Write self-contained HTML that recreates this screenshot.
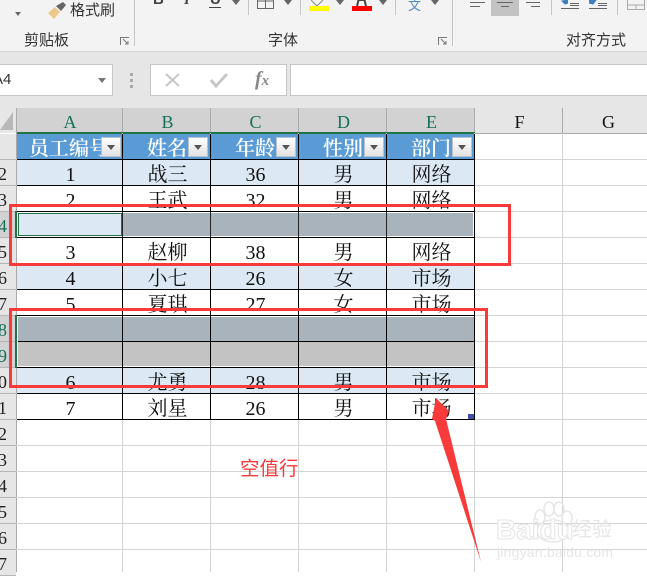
<!DOCTYPE html>
<html lang="zh"><head><meta charset="utf-8"><title>Excel</title>
<style>
html,body{margin:0;padding:0}
body{width:647px;height:572px;overflow:hidden;position:relative;background:#fff;font-family:"Liberation Sans","Noto Sans CJK SC",sans-serif}
.a{position:absolute}
.t{position:absolute;white-space:nowrap;color:#333}
.sep{position:absolute;width:1px;background:#c6c6c6}
.ch{position:absolute;top:108px;height:25px;padding-left:2px;background:#d2d2d2;border-right:1px solid #aaa;box-sizing:border-box;text-align:center;font:18px/28px "Liberation Serif",serif;color:#14705a}
.rh{position:absolute;left:0;width:16px;height:26px;box-sizing:border-box;border-bottom:1px solid #b5b5b5;background:#e6e6e6;font:18px/26px "Liberation Serif",serif;color:#222;overflow:hidden}
.rh span{position:absolute;right:9px;top:1px}
.gh{position:absolute;left:16px;width:631px;height:1px;background:#d4d4d4}
.gv{position:absolute;top:133px;height:439px;width:1px;background:#d4d4d4}
table{position:absolute;left:17px;top:134px;display:block;width:458px;font:20px/30px "Liberation Serif","Noto Serif CJK SC",serif;color:#111}
tbody{display:block}
tr{display:flex;height:26px}
td{display:block;flex:none;width:88px;height:26px;box-sizing:border-box;padding:0 0 0 2px;border-right:1px solid #000;border-bottom:1px solid #000;text-align:center;overflow:hidden;position:relative;white-space:nowrap}
td:first-child{width:106px}
.h td{background:#5b9bd5;color:#fff;font-weight:600;text-align:left}
.h span{position:absolute;top:0}
.b td{background:#dce9f5}
.f{position:absolute;top:3px;width:20px;height:20px;box-sizing:border-box;background:linear-gradient(#fff,#e2e2e2);border:1px solid #b9c3cc}
.f:after{content:"";position:absolute;left:5px;top:7px;border:4px solid transparent;border-top:5px solid #555;border-bottom:0}
.dd{position:absolute;border:4px solid transparent;border-top:5px solid #666;border-bottom:0}
.red{position:absolute;border:3px solid #f93a3a;box-sizing:border-box}
</style></head><body>

<!-- ribbon -->
<div class="a" style="left:0;top:0;width:647px;height:51px;background:#f3f3f3"></div>
<div class="a" style="left:0;top:51px;width:647px;height:1px;background:#d4d4d4"></div>
<div class="a" style="left:0;top:52px;width:647px;height:56px;background:#e6e6e6"></div>

<div class="dd" style="left:15px;top:12px;border-width:3px;border-top-width:4px"></div>
<svg class="a" style="left:47px;top:2px" width="20" height="17" viewBox="0 0 20 17"><path d="M1 11L8 5l5 5-6 7z" fill="#efc98c"/><path d="M9 4l7-4 3 3-5 6z" fill="#666"/></svg>
<div class="t" style="left:70px;top:1px;font-size:15px;line-height:20px">格式刷</div>
<div class="t" style="left:24px;top:31px;font-size:15px;line-height:20px">剪贴板</div>
<div class="t" style="left:268px;top:31px;font-size:15px;line-height:20px">字体</div>
<div class="t" style="left:566px;top:31px;font-size:15px;line-height:20px">对齐方式</div>

<svg class="a" style="left:120px;top:37px" width="10" height="9" viewBox="0 0 10 9"><path d="M.5 8V.5H9M3 2l5 5M8 4v3H5" fill="none" stroke="#777"/></svg>
<svg class="a" style="left:438px;top:37px" width="10" height="9" viewBox="0 0 10 9"><path d="M.5 8V.5H9M3 2l5 5M8 4v3H5" fill="none" stroke="#777"/></svg>
<div class="sep" style="left:134px;top:0;height:46px"></div>
<div class="sep" style="left:452px;top:0;height:46px"></div>
<div class="sep" style="left:248px;top:0;height:15px"></div>
<div class="sep" style="left:300px;top:0;height:15px"></div>
<div class="sep" style="left:395px;top:0;height:15px"></div>
<div class="sep" style="left:551px;top:0;height:15px"></div>
<div class="sep" style="left:617px;top:0;height:15px"></div>

<div class="t" style="left:153px;top:-9px;font:bold 15px/18px 'Liberation Sans',sans-serif;color:#444">B</div>
<div class="t" style="left:184px;top:-9px;font:italic bold 15px/18px 'Liberation Serif',serif;color:#444">I</div>
<div class="t" style="left:210px;top:-9px;font:bold 15px/18px 'Liberation Sans',sans-serif;color:#444">U</div>
<div class="a" style="left:209px;top:7px;width:12px;height:1px;background:#444"></div>
<div class="dd" style="left:232px;top:0"></div>
<svg class="a" style="left:257px;top:0" width="18" height="9" viewBox="0 0 18 9"><path d="M.5 0v8.500h16V0M8.500 0v8.500M.5 1h16" fill="none" stroke="#666"/></svg>
<div class="dd" style="left:284px;top:0"></div>
<svg class="a" style="left:310px;top:0" width="20" height="6" viewBox="0 0 20 6"><path d="M1 0l6 6 6-6" fill="none" stroke="#888"/></svg>
<div class="a" style="left:309px;top:6px;width:20px;height:5px;background:#ff0"></div>
<div class="dd" style="left:336px;top:0"></div>
<svg class="a" style="left:355px;top:0" width="14" height="6" viewBox="0 0 14 6"><path d="M2 6l1.500-6h6L11 6" fill="none" stroke="#444" stroke-width="2"/></svg>
<div class="a" style="left:352px;top:6px;width:20px;height:5px;background:#f00"></div>
<div class="dd" style="left:379px;top:0"></div>
<div class="t" style="left:408px;top:-2px;font-size:13px;line-height:15px;color:#4f88c6">文</div>
<div class="dd" style="left:431px;top:0"></div>

<div class="a" style="left:491px;top:0;width:28px;height:16px;background:#c3c3c3"></div>
<svg class="a" style="left:465px;top:0" width="80" height="10" viewBox="0 0 80 10" stroke="#666" fill="none"><path d="M5 2.500h15M5 6.500h10M32 2.500h16M36 6.500h8M61 2.500h14M66 6.500h9"/></svg>
<svg class="a" style="left:560px;top:0" width="50" height="10" viewBox="0 0 50 10" fill="none"><path d="M8 0L2 1l3 3 3-1" fill="#3f7fc4" stroke="#3f7fc4"/><path d="M29 0h7l-3 4-4-1" fill="#3f7fc4" stroke="#3f7fc4"/><path d="M10 3.500h9M10 5.500h9M1 8.500h18M38 3.500h9M38 5.500h9M29 8.500h18" stroke="#666"/></svg>
<svg class="a" style="left:627px;top:0" width="20" height="10" viewBox="0 0 20 10" fill="none" stroke="#aaa"><path d="M.5 0v9.500h17V0M.5 5h17M9 5v4.500"/></svg>

<!-- formula bar -->
<div class="a" style="left:-2px;top:64px;width:115px;height:32px;background:#fff;border:1px solid #c6c6c6;box-sizing:border-box"></div>
<div class="t" style="left:-7px;top:70px;font-size:15px;line-height:20px;color:#333">A4</div>
<div class="dd" style="left:98px;top:78px;border-top-color:#777"></div>
<div class="a" style="left:130px;top:73px;width:3px;height:3px;background:#aaa;box-shadow:0 6px #aaa,0 12px #aaa"></div>
<div class="a" style="left:150px;top:64px;width:137px;height:32px;background:#fff;border:1px solid #c6c6c6;box-sizing:border-box"></div>
<svg class="a" style="left:164px;top:72px" width="18" height="16" viewBox="0 0 18 16" fill="none" stroke="#c8c8c8" stroke-width="2"><path d="M2 2l13 12M15 2L2 14"/></svg>
<svg class="a" style="left:209px;top:72px" width="20" height="16" viewBox="0 0 20 16" fill="none" stroke="#c8c8c8" stroke-width="3"><path d="M2 8l5 6L18 2"/></svg>
<div class="t" style="left:255px;top:67px;font:italic bold 20px/24px 'Liberation Serif',serif;color:#888">f<span style="font-size:15px">x</span></div>
<div class="a" style="left:290px;top:64px;width:360px;height:32px;background:#fff;border:1px solid #c6c6c6;box-sizing:border-box"></div>

<!-- column headers -->
<div class="a" style="left:0;top:108px;width:647px;height:25px;background:#e6e6e6"></div>
<svg class="a" style="left:0;top:112px" width="14" height="19"><path d="M13 0v18H0z" fill="#b8b8b8"/></svg>
<div class="ch" style="left:16px;width:107px">A</div>
<div class="ch" style="left:123px;width:88px">B</div>
<div class="ch" style="left:211px;width:88px">C</div>
<div class="ch" style="left:299px;width:88px">D</div>
<div class="ch" style="left:387px;width:88px">E</div>
<div class="ch" style="left:475px;width:88px;background:#e6e6e6;color:#111">F</div>
<div class="ch" style="left:563px;width:88px;padding-left:4px;background:#e6e6e6;color:#111">G</div>
<div class="a" style="left:16px;top:132px;width:459px;height:2px;background:#217346"></div>
<div class="a" style="left:475px;top:133px;width:172px;height:1px;background:#aaa"></div>

<!-- row headers -->
<div class="rh" style="top:134px"></div>
<div class="rh" style="top:160px"><span>2</span></div>
<div class="rh" style="top:186px"><span>3</span></div>
<div class="rh" style="top:212px;background:#d2d2d2;color:#14705a"><span>4</span></div>
<div class="rh" style="top:238px"><span>5</span></div>
<div class="rh" style="top:264px"><span>6</span></div>
<div class="rh" style="top:290px"><span>7</span></div>
<div class="rh" style="top:316px;background:#d2d2d2;color:#14705a"><span>8</span></div>
<div class="rh" style="top:342px;background:#d2d2d2;color:#14705a"><span>9</span></div>
<div class="rh" style="top:368px"><span>10</span></div>
<div class="rh" style="top:394px"><span>11</span></div>
<div class="rh" style="top:420px"><span>12</span></div>
<div class="rh" style="top:446px"><span>13</span></div>
<div class="rh" style="top:472px"><span>14</span></div>
<div class="rh" style="top:498px"><span>15</span></div>
<div class="rh" style="top:524px"><span>16</span></div>
<div class="rh" style="top:550px"><span>17</span></div>
<div class="a" style="left:16px;top:108px;width:1px;height:464px;background:#aaa"></div>

<!-- gridlines -->
<div class="gh" style="top:159px"></div><div class="gh" style="top:185px"></div><div class="gh" style="top:211px"></div><div class="gh" style="top:237px"></div><div class="gh" style="top:263px"></div><div class="gh" style="top:289px"></div><div class="gh" style="top:315px"></div><div class="gh" style="top:341px"></div><div class="gh" style="top:367px"></div><div class="gh" style="top:393px"></div><div class="gh" style="top:419px"></div><div class="gh" style="top:445px"></div><div class="gh" style="top:471px"></div><div class="gh" style="top:497px"></div><div class="gh" style="top:523px"></div><div class="gh" style="top:549px"></div>
<div class="gv" style="left:122px"></div><div class="gv" style="left:210px"></div><div class="gv" style="left:298px"></div><div class="gv" style="left:386px"></div><div class="gv" style="left:474px"></div><div class="gv" style="left:562px"></div>

<!-- table -->
<table>
<tr class="h"><td><span style="left:12px">员工编号</span><div class="f" style="left:84px"></div></td><td><span style="left:24px">姓名</span><div class="f" style="left:65px"></div></td><td><span style="left:24px">年龄</span><div class="f" style="left:65px"></div></td><td><span style="left:24px">性别</span><div class="f" style="left:65px"></div></td><td><span style="left:24px">部门</span><div class="f" style="left:65px"></div></td></tr>
<tr class="b"><td>1</td><td>战三</td><td>36</td><td>男</td><td>网络</td></tr>
<tr><td>2</td><td>王武</td><td>32</td><td>男</td><td>网络</td></tr>
<tr><td></td><td></td><td></td><td></td><td></td></tr>
<tr><td>3</td><td>赵柳</td><td>38</td><td>男</td><td>网络</td></tr>
<tr class="b"><td>4</td><td>小七</td><td>26</td><td>女</td><td>市场</td></tr>
<tr><td>5</td><td>夏琪</td><td>27</td><td>女</td><td>市场</td></tr>
<tr><td></td><td></td><td></td><td></td><td></td></tr>
<tr><td></td><td></td><td></td><td></td><td></td></tr>
<tr class="b"><td>6</td><td>尤勇</td><td>28</td><td>男</td><td>市场</td></tr>
<tr><td>7</td><td>刘星</td><td>26</td><td>男</td><td>市场</td></tr>
</table>

<!-- selection fills -->
<div class="a" style="left:17px;top:212px;width:457px;height:25px;background:#fff"></div>
<div class="a" style="left:18px;top:213px;width:104px;height:23px;box-sizing:border-box;background:#dce9f5;border:1px solid #217346"></div>
<div class="a" style="left:123px;top:213px;width:350px;height:23px;background:#a9b3bc"></div>
<div class="a" style="left:210px;top:212px;width:1px;height:25px;background:#222"></div>
<div class="a" style="left:298px;top:212px;width:1px;height:25px;background:#222"></div>
<div class="a" style="left:386px;top:212px;width:1px;height:25px;background:#222"></div>
<div class="a" style="left:122px;top:212px;width:1px;height:25px;background:#222"></div>

<div class="a" style="left:17px;top:316px;width:457px;height:51px;background:#fff"></div>
<div class="a" style="left:18px;top:317px;width:456px;height:24px;background:#a9b3bc"></div>
<div class="a" style="left:18px;top:341px;width:456px;height:1px;background:#000"></div>
<div class="a" style="left:18px;top:342px;width:456px;height:24px;background:#c3c3c3"></div>
<div class="a" style="left:122px;top:316px;width:1px;height:51px;background:#000"></div>
<div class="a" style="left:210px;top:316px;width:1px;height:51px;background:#000"></div>
<div class="a" style="left:298px;top:316px;width:1px;height:51px;background:#000"></div>
<div class="a" style="left:386px;top:316px;width:1px;height:51px;background:#000"></div>

<div class="a" style="left:15px;top:211px;width:2px;height:27px;background:#217346"></div>
<div class="a" style="left:15px;top:315px;width:2px;height:53px;background:#217346"></div>
<div class="a" style="left:468px;top:414px;width:6px;height:5px;background:#3f4fa8"></div>

<!-- watermark -->
<svg class="a" style="left:495px;top:498px" width="120" height="70" viewBox="0 0 120 70" fill="none" stroke="#e6e6e6" stroke-width="1.500"><ellipse cx="45" cy="19" rx="5" ry="7"/><ellipse cx="54" cy="11" rx="5" ry="7"/><ellipse cx="64" cy="11" rx="5" ry="7"/><ellipse cx="72" cy="20" rx="5" ry="7"/><ellipse cx="58" cy="33" rx="16" ry="11"/></svg>
<div class="t" style="left:496px;top:514px;font:bold 28px/32px 'Liberation Sans',sans-serif;color:#fff;-webkit-text-stroke:1px #e4e4e4">Baidu</div>
<div class="t" style="left:572px;top:518px;font-size:20px;line-height:24px;color:#e6e6e6">经验</div>
<div class="t" style="left:497px;top:543px;font-size:14px;line-height:18px;color:#e6e6e6;letter-spacing:.2px">jingyan.baidu.com</div>

<!-- annotations -->
<div class="red" style="left:9px;top:204px;width:502px;height:62px"></div>
<div class="red" style="left:9px;top:308px;width:479px;height:80px"></div>
<svg class="a" style="left:425px;top:392px" width="62" height="176" viewBox="0 0 62 176"><path d="M11 6L24 19 21 27 56 170 10 29 7 27z" fill="#f93a3a"/></svg>
<div class="t" style="left:240px;top:457px;font-size:19.500px;line-height:24px;color:#f93a3a">空值行</div>
</body></html>
